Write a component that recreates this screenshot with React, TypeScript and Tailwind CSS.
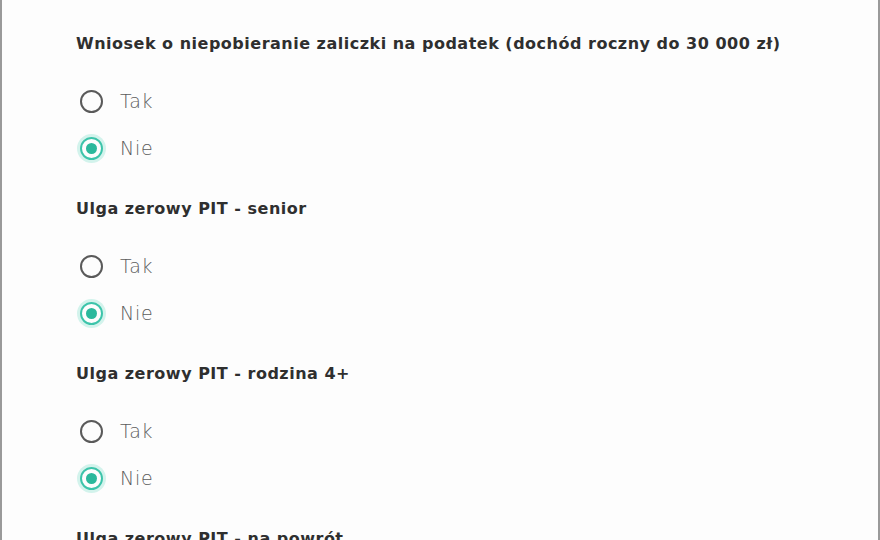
import React, { useState } from 'react';

const questions = [
    'Wniosek o niepobieranie zaliczki na podatek (dochód roczny do 30 000 zł)',
    'Ulga zerowy PIT - senior',
    'Ulga zerowy PIT - rodzina 4+',
    'Ulga zerowy PIT - na powrót',
];

const Radio: React.FC<{ label: string; checked: boolean; onClick: () => void }> = ({ label, checked, onClick }) => {
    return (
        <button onClick={onClick} className="flex items-center h-8 gap-[17px] text-left">
            <span
                className={
                    checked
                        ? 'w-[23px] h-[23px] rounded-full border-2 border-[#3cc4aa] shadow-[0_0_0_3px_#d3f3ec] flex items-center justify-center'
                        : 'w-[23px] h-[23px] rounded-full border-2 border-[#5a5a5a]'
                }
            >
                {checked && <span className="w-[11px] h-[11px] rounded-full bg-[#2bb89c]"></span>}
            </span>
            <span className="text-[19px] font-extralight tracking-[0.7px] text-[#5c5c5c]">{label}</span>
        </button>
    );
};

const App: React.FC = () => {
    const [answers, setAnswers] = useState<string[]>(questions.map(() => 'Nie'));

    const setAnswer = (index: number, value: string) => {
        setAnswers(prev => prev.map((a, i) => (i === index ? value : a)));
    };

    return (
        <div
            className="w-[880px] h-[540px] overflow-hidden bg-[#fdfdfd] border-l-2 border-r-2 border-[#9a9a9a]"
            style={{ fontFamily: '"DejaVu Sans", "Noto Sans", sans-serif' }}
        >
            <div className="pl-[74px] pt-[32px] flex flex-col gap-[33px]">
                {questions.map((q, i) => (
                    <div key={q} className="flex flex-col">
                        <h3 className="h-6 leading-6 text-[16px] font-bold tracking-[0.5px] text-[#2f2f2f] mb-[29px] whitespace-nowrap">{q}</h3>
                        <div className="flex flex-col gap-[15px] pl-[4px]">
                            <Radio label="Tak" checked={answers[i] === 'Tak'} onClick={() => setAnswer(i, 'Tak')} />
                            <Radio label="Nie" checked={answers[i] === 'Nie'} onClick={() => setAnswer(i, 'Nie')} />
                        </div>
                    </div>
                ))}
            </div>
        </div>
    );
};

export default App;
